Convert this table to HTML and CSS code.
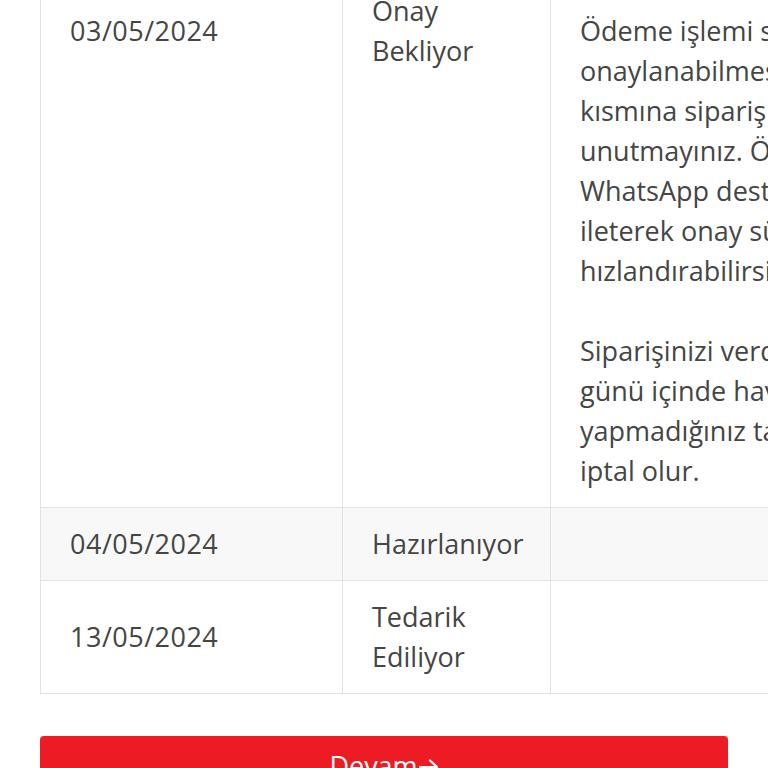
FILE: index.html
```html
<!DOCTYPE html>
<html>
  <head>
    <title>Sipariş Durumu</title>
    <link rel="stylesheet" href="styles.css">
  </head>
  <body>
    <div class="page">
      <table class="status-table">
        <colgroup>
          <col class="col-date">
          <col class="col-status">
          <col class="col-note">
        </colgroup>
        <tbody>
          <tr>
            <td class="date">03/05/2024</td>
            <td>Onay<br>Bekliyor</td>
            <td class="note">
              Havale / EFT ile ödeme yöntemini<br>
              seçtiniz. Ödemenizi aşağıdaki<br>
              hesap bilgilerine yapabilirsiniz.<br>
              <br>
              Banka: Ziraat Bankası<br>
              Alıcı: Örnek Ticaret Ltd. Şti.<br>
              IBAN: TR00 0000 0000 0000<br>
              0000 0000 00<br>
              <br>
              Tutar: 1.250,00 TL<br>
              <br>
              Ödeme işlemi sonrası siparişinizin<br>
              onaylanabilmesi için açıklama<br>
              kısmına sipariş numaranızı yazmayı<br>
              unutmayınız. Ödeme dekontunu<br>
              WhatsApp destek hattımıza<br>
              ileterek onay sürecini<br>
              hızlandırabilirsiniz.<br>
              <br>
              Siparişinizi verdikten sonra 3 iş<br>
              günü içinde havale ödemesini<br>
              yapmadığınız takdirde siparişiniz<br>
              iptal olur.
            </td>
          </tr>
          <tr class="striped">
            <td class="date">04/05/2024</td>
            <td>Hazırlanıyor</td>
            <td></td>
          </tr>
          <tr>
            <td class="date">13/05/2024</td>
            <td>Tedarik<br>Ediliyor</td>
            <td></td>
          </tr>
        </tbody>
      </table>

      <button class="continue-button">Devam<svg class="arrow" width="20" height="16" viewBox="0 0 20 16"><path d="M1 8h17M11 1.5 18 8l-7 6.5" fill="none" stroke="#ffffff" stroke-width="2.2" stroke-linecap="round" stroke-linejoin="round"/></svg></button>
    </div>
  </body>
</html>
```

FILE: styles.css
```css
html,
body {
  overflow-x: hidden;
}

body {
  margin: 0;
  background-color: #ffffff;
  color: #454545;
  font-family: "Open Sans", "Noto Sans", sans-serif;
  font-size: 27px;
  line-height: 40px;
}

.page {
  padding: 0 40px;
  margin-top: -446px;
}

.status-table {
  table-layout: fixed;
  width: 1070px;
  border-collapse: collapse;
  border: 1px solid #e2e2e2;
}

.col-date {
  width: 302px;
}

.col-status {
  width: 208px;
}

.col-note {
  width: 560px;
}

.status-table td {
  padding: 16px 29px;
  vertical-align: middle;
  border: 1px solid #e2e2e2;
}

.status-table .date {
  letter-spacing: 0.5px;
}

.status-table .striped td {
  background-color: #f8f8f8;
}

.note {
  white-space: nowrap;
}

.continue-button {
  display: block;
  width: 100%;
  margin-top: 42px;
  padding: 10px 20px 18px;
  font-family: inherit;
  font-size: 27px;
  line-height: 40px;
  color: #ffffff;
  background-color: #ed1c24;
  border: none;
  border-radius: 4px;
  cursor: pointer;
}

.arrow {
  margin-left: 1px;
  vertical-align: 1px;
}
```
